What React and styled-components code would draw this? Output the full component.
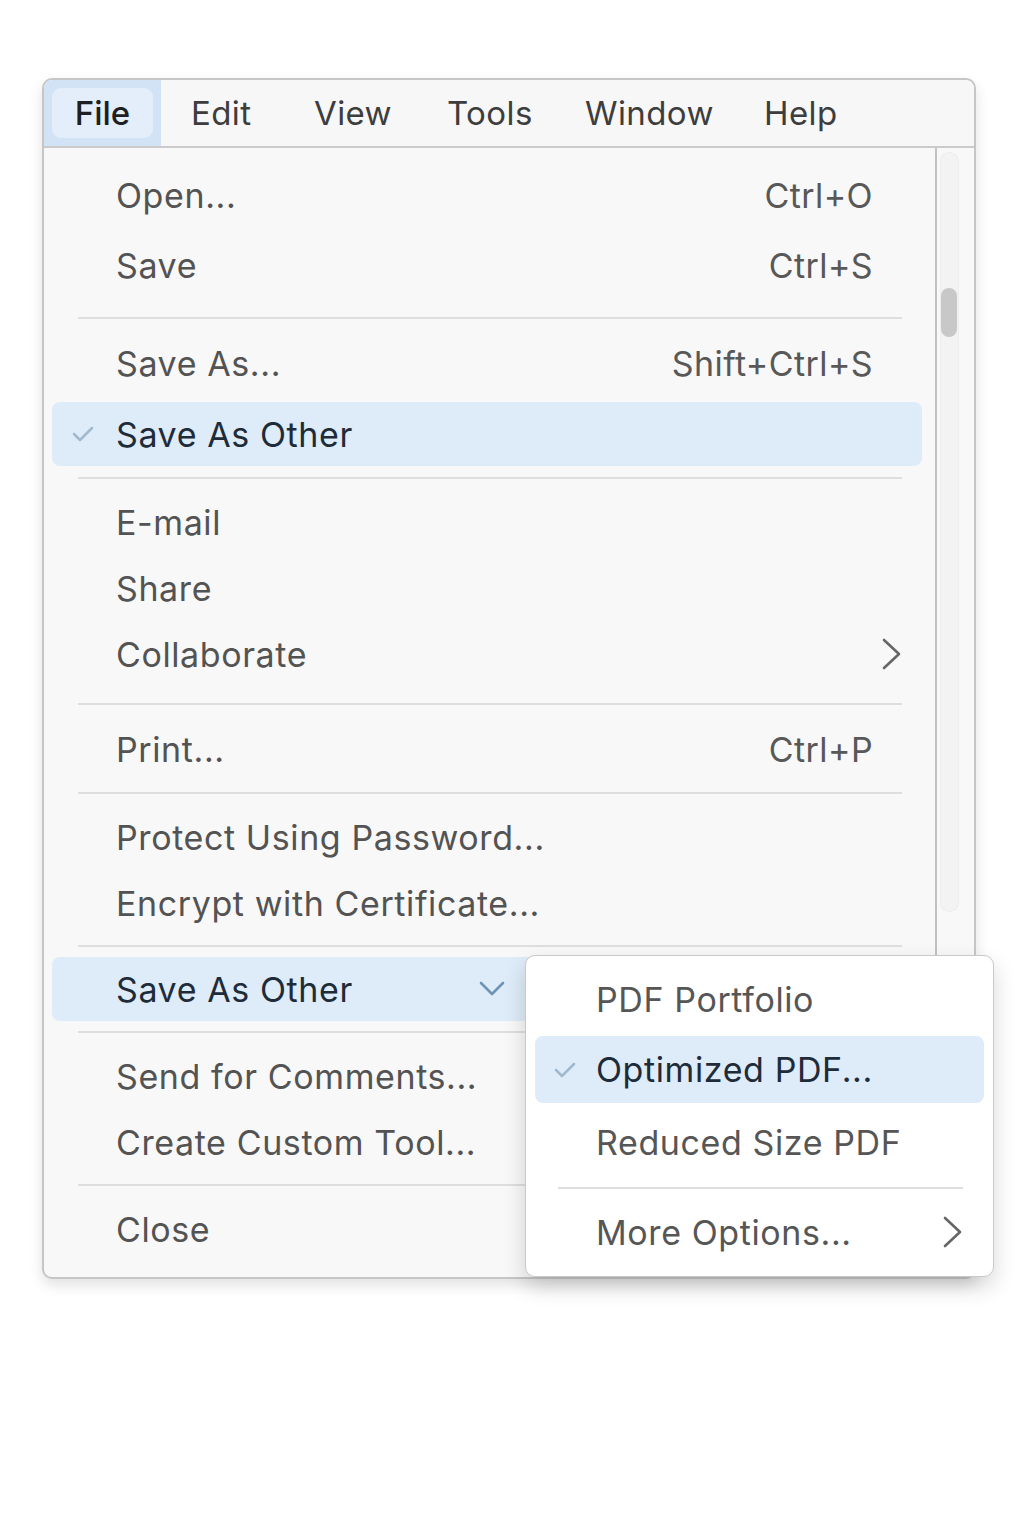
import React from 'react';
import styled, { createGlobalStyle } from 'styled-components';

const GlobalStyle = createGlobalStyle`
    body {
        margin: 0;
        background: #ffffff;
        font-family: Inter, "Noto Sans", "Liberation Sans", sans-serif;
    }
`;

const Page = styled.div`
    padding: 78px 0 0 42px;
    height: 1458px;
`;

const Window = styled.div`
    position: relative;
    width: 930px;
    border: 2px solid #c6c6c6;
    border-radius: 10px;
    background: #f8f8f8;
    box-shadow: 0 6px 14px rgba(0, 0, 0, 0.12);
`;

const MenuBar = styled.div`
    display: flex;
    align-items: stretch;
    height: 66px;
    border-bottom: 2px solid #cbcbcb;
    background: #f7f7f7;
    border-radius: 9px 9px 0 0;
`;

const Titles = styled.div`
    display: flex;
    padding-left: 30px;
`;

const MenuTitle = styled.div`
    display: flex;
    align-items: center;
    width: ${p => p.$w}px;
    font-size: 33px;
    color: #3d3d3d;
    letter-spacing: 0.4px;
`;

const ActiveTitle = styled.div`
    display: flex;
    align-items: stretch;
    padding: 8px;
    width: 117px;
    box-sizing: border-box;
    background: #d2e3f6;
    border-radius: 8px 0 0 0;
`;

const ActiveInner = styled.div`
    flex: 1;
    display: flex;
    align-items: center;
    justify-content: center;
    background: #e3eefa;
    border-radius: 9px;
    font-size: 33px;
    font-weight: 500;
    color: #1d1f22;
`;

const Body = styled.div`
    display: flex;
`;

const Content = styled.div`
    flex: 1;
    padding: 12px 0 15px;
`;

const ScrollColumn = styled.div`
    width: 39px;
    border-left: 2px solid #c2c2c2;
    padding: 4px 0 0 3px;
    box-sizing: border-box;
`;

const Track = styled.div`
    width: 19px;
    height: 760px;
    border-radius: 10px;
    background: #f3f3f3;
    box-shadow: inset 0 0 2px rgba(0, 0, 0, 0.08);
    padding-top: 136px;
    box-sizing: border-box;
`;

const Thumb = styled.div`
    width: 16px;
    height: 49px;
    margin-left: 1px;
    border-radius: 8px;
    background: #c8c8c8;
`;

const Row = styled.div`
    display: flex;
    align-items: center;
    height: ${p => p.$h || 66}px;
    padding: 0 ${p => p.$pr || 62}px 0 72px;
    font-size: 34px;
    color: #535353;
    letter-spacing: 0.6px;
`;

const HighlightRow = styled.div`
    position: relative;
    display: flex;
    align-items: center;
    height: ${p => p.$h || 64}px;
    margin: ${p => p.$mt || 0}px ${p => p.$mr || 13}px 0 ${p => p.$ml || 8}px;
    padding: 0 ${p => p.$pr || 30}px 0 ${p => p.$pl || 64}px;
    border-radius: 8px;
    background: #deebf8;
    font-size: 34px;
    color: #1e2b38;
    letter-spacing: 0.6px;
`;

const Label = styled.span`
    flex: 1;
    white-space: nowrap;
`;

const Shortcut = styled.span`
    color: #585858;
    letter-spacing: 0.4px;
`;

const Check = styled.svg`
    position: absolute;
    left: ${p => p.$left}px;
    top: 50%;
    transform: translateY(-50%);
`;

const Separator = styled.div`
    height: 2px;
    background: #dedede;
    margin: ${p => p.$mt}px ${p => p.$mr || 33}px ${p => p.$mb}px ${p => p.$ml || 34}px;
`;

const SubMenu = styled.div`
    position: absolute;
    left: 481px;
    top: 875px;
    width: 469px;
    height: 322px;
    box-sizing: border-box;
    padding-top: 10px;
    background: #ffffff;
    border: 1.5px solid #c9c9c9;
    border-radius: 10px;
    box-shadow: 0 10px 22px rgba(0, 0, 0, 0.16);
`;

const SubRow = styled(Row)`
    padding: 0 30px 0 70px;
    color: #565656;
    margin-top: ${p => p.$mt || 0}px;
`;

const ChevronRight = () => (
    <svg width="21" height="32" viewBox="0 0 21 32">
        <path d="M3 2 L18 16 L3 30" fill="none" stroke="#666" strokeWidth="2.6" strokeLinecap="round" strokeLinejoin="round" />
    </svg>
);

const ChevronDown = () => (
    <svg width="26" height="16" viewBox="0 0 26 16">
        <path d="M2 2 L13 13 L24 2" fill="none" stroke="#6f94b7" strokeWidth="2.6" strokeLinecap="round" strokeLinejoin="round" />
    </svg>
);

const CheckMark = ({ left }) => (
    <Check $left={left} width="22" height="16" viewBox="0 0 22 16">
        <path d="M2 8 L8 14 L20 2" fill="none" stroke="#a0b9cf" strokeWidth="2.5" strokeLinecap="round" strokeLinejoin="round" />
    </Check>
);

const titles = [
    { name: 'Edit', w: 123 },
    { name: 'View', w: 133 },
    { name: 'Tools', w: 138 },
    { name: 'Window', w: 179 },
    { name: 'Help', w: 100 },
];

const App = () => {
    return (
        <Page>
            <GlobalStyle />
            <Window>
                <MenuBar>
                    <ActiveTitle>
                        <ActiveInner>File</ActiveInner>
                    </ActiveTitle>
                    <Titles>
                        {titles.map(t => (
                            <MenuTitle key={t.name} $w={t.w}>{t.name}</MenuTitle>
                        ))}
                    </Titles>
                </MenuBar>
                <Body>
                    <Content>
                        <Row $h={70}><Label>Open...</Label><Shortcut>Ctrl+O</Shortcut></Row>
                        <Row $h={70}><Label>Save</Label><Shortcut>Ctrl+S</Shortcut></Row>
                        <Separator $mt={17} $mb={11} />
                        <Row><Label>Save As...</Label><Shortcut>Shift+Ctrl+S</Shortcut></Row>
                        <HighlightRow $mt={6}>
                            <CheckMark left={20} />
                            <Label>Save As Other</Label>
                        </HighlightRow>
                        <Separator $mt={11} $mb={10} />
                        <Row><Label>E-mail</Label></Row>
                        <Row><Label>Share</Label></Row>
                        <Row $pr={33}><Label>Collaborate</Label><ChevronRight /></Row>
                        <Separator $mt={16} $mb={11} />
                        <Row><Label>Print...</Label><Shortcut>Ctrl+P</Shortcut></Row>
                        <Separator $mt={10} $mb={10} />
                        <Row><Label>Protect Using Password...</Label></Row>
                        <Row><Label>Encrypt with Certificate...</Label></Row>
                        <Separator $mt={9} $mb={10} />
                        <HighlightRow $pr={417}>
                            <Label>Save As Other</Label>
                            <ChevronDown />
                        </HighlightRow>
                        <Separator $mt={10} $mb={10} />
                        <Row><Label>Send for Comments...</Label></Row>
                        <Row><Label>Create Custom Tool...</Label></Row>
                        <Separator $mt={9} $mb={10} />
                        <Row><Label>Close</Label></Row>
                    </Content>
                    <ScrollColumn>
                        <Track>
                            <Thumb />
                        </Track>
                    </ScrollColumn>
                </Body>
                <SubMenu>
                    <SubRow><Label>PDF Portfolio</Label></SubRow>
                    <HighlightRow $h={67} $mt={4} $ml={9} $mr={9} $pl={61}>
                        <CheckMark left={19} />
                        <Label>Optimized PDF...</Label>
                    </HighlightRow>
                    <SubRow $mt={6}><Label>Reduced Size PDF</Label></SubRow>
                    <Separator $mt={12} $mb={10} $ml={32} $mr={30} />
                    <SubRow><Label>More Options...</Label><ChevronRight /></SubRow>
                </SubMenu>
            </Window>
        </Page>
    );
};

export default App;
